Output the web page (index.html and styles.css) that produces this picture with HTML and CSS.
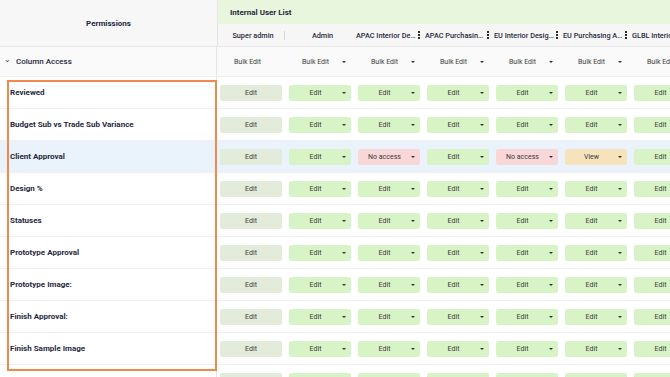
FILE: index.html
```html
<!DOCTYPE html>
<html lang="en">
  <head>
    <meta charset="UTF-8" />
    <meta name="viewport" content="width=device-width, initial-scale=1.0" />
    <title>Permissions</title>
    <link rel="stylesheet" href="styles.css">
  </head>
  <body>
    <div class="table">
      <!-- Header -->
      <div class="head">
        <div class="head-left">Permissions</div>
        <div class="head-right">
          <div class="group-title">Internal User List</div>
          <div class="cols">
            <div class="col-title"><span class="col-name">Super admin</span><span class="bar"></span></div>
            <div class="col-title"><span class="col-name">Admin</span></div>
            <div class="col-title wide"><span class="col-name">APAC Interior Designer</span><span class="grip"></span></div>
            <div class="col-title wide"><span class="col-name">APAC Purchasing Agent</span><span class="grip"></span></div>
            <div class="col-title wide"><span class="col-name">EU Interior Designer</span><span class="grip"></span></div>
            <div class="col-title wide"><span class="col-name">EU Purchasing Agent</span><span class="grip"></span></div>
            <div class="col-title wide"><span class="col-name">GLBL Interior Designer</span></div>
          </div>
        </div>
      </div>

      <!-- Group row -->
      <div class="row group-row">
        <div class="label group-label"><span class="chev">&#8964;</span>Column Access</div>
        <div class="cell"><div class="btn plain locked">Bulk Edit</div></div>
        <div class="cell"><div class="btn plain"><span class="txt">Bulk Edit</span><span class="caret"></span></div></div>
        <div class="cell"><div class="btn plain"><span class="txt">Bulk Edit</span><span class="caret"></span></div></div>
        <div class="cell"><div class="btn plain"><span class="txt">Bulk Edit</span><span class="caret"></span></div></div>
        <div class="cell"><div class="btn plain"><span class="txt">Bulk Edit</span><span class="caret"></span></div></div>
        <div class="cell"><div class="btn plain"><span class="txt">Bulk Edit</span><span class="caret"></span></div></div>
        <div class="cell"><div class="btn plain"><span class="txt">Bulk Edit</span><span class="caret"></span></div></div>
      </div>

      <div class="row">
        <div class="label">Reviewed</div>
        <div class="cell"><div class="btn locked">Edit</div></div>
        <div class="cell"><div class="btn edit"><span class="txt">Edit</span><span class="caret"></span></div></div>
        <div class="cell"><div class="btn edit"><span class="txt">Edit</span><span class="caret"></span></div></div>
        <div class="cell"><div class="btn edit"><span class="txt">Edit</span><span class="caret"></span></div></div>
        <div class="cell"><div class="btn edit"><span class="txt">Edit</span><span class="caret"></span></div></div>
        <div class="cell"><div class="btn edit"><span class="txt">Edit</span><span class="caret"></span></div></div>
        <div class="cell"><div class="btn edit"><span class="txt">Edit</span><span class="caret"></span></div></div>
      </div>

      <div class="row">
        <div class="label">Budget Sub vs Trade Sub Variance</div>
        <div class="cell"><div class="btn locked">Edit</div></div>
        <div class="cell"><div class="btn edit"><span class="txt">Edit</span><span class="caret"></span></div></div>
        <div class="cell"><div class="btn edit"><span class="txt">Edit</span><span class="caret"></span></div></div>
        <div class="cell"><div class="btn edit"><span class="txt">Edit</span><span class="caret"></span></div></div>
        <div class="cell"><div class="btn edit"><span class="txt">Edit</span><span class="caret"></span></div></div>
        <div class="cell"><div class="btn edit"><span class="txt">Edit</span><span class="caret"></span></div></div>
        <div class="cell"><div class="btn edit"><span class="txt">Edit</span><span class="caret"></span></div></div>
      </div>

      <div class="row selected">
        <div class="label">Client Approval</div>
        <div class="cell"><div class="btn locked">Edit</div></div>
        <div class="cell"><div class="btn edit"><span class="txt">Edit</span><span class="caret"></span></div></div>
        <div class="cell"><div class="btn none"><span class="txt">No access</span><span class="caret"></span></div></div>
        <div class="cell"><div class="btn edit"><span class="txt">Edit</span><span class="caret"></span></div></div>
        <div class="cell"><div class="btn none"><span class="txt">No access</span><span class="caret"></span></div></div>
        <div class="cell"><div class="btn view"><span class="txt">View</span><span class="caret"></span></div></div>
        <div class="cell"><div class="btn edit"><span class="txt">Edit</span><span class="caret"></span></div></div>
      </div>

      <div class="row">
        <div class="label">Design %</div>
        <div class="cell"><div class="btn locked">Edit</div></div>
        <div class="cell"><div class="btn edit"><span class="txt">Edit</span><span class="caret"></span></div></div>
        <div class="cell"><div class="btn edit"><span class="txt">Edit</span><span class="caret"></span></div></div>
        <div class="cell"><div class="btn edit"><span class="txt">Edit</span><span class="caret"></span></div></div>
        <div class="cell"><div class="btn edit"><span class="txt">Edit</span><span class="caret"></span></div></div>
        <div class="cell"><div class="btn edit"><span class="txt">Edit</span><span class="caret"></span></div></div>
        <div class="cell"><div class="btn edit"><span class="txt">Edit</span><span class="caret"></span></div></div>
      </div>

      <div class="row">
        <div class="label">Statuses</div>
        <div class="cell"><div class="btn locked">Edit</div></div>
        <div class="cell"><div class="btn edit"><span class="txt">Edit</span><span class="caret"></span></div></div>
        <div class="cell"><div class="btn edit"><span class="txt">Edit</span><span class="caret"></span></div></div>
        <div class="cell"><div class="btn edit"><span class="txt">Edit</span><span class="caret"></span></div></div>
        <div class="cell"><div class="btn edit"><span class="txt">Edit</span><span class="caret"></span></div></div>
        <div class="cell"><div class="btn edit"><span class="txt">Edit</span><span class="caret"></span></div></div>
        <div class="cell"><div class="btn edit"><span class="txt">Edit</span><span class="caret"></span></div></div>
      </div>

      <div class="row">
        <div class="label">Prototype Approval</div>
        <div class="cell"><div class="btn locked">Edit</div></div>
        <div class="cell"><div class="btn edit"><span class="txt">Edit</span><span class="caret"></span></div></div>
        <div class="cell"><div class="btn edit"><span class="txt">Edit</span><span class="caret"></span></div></div>
        <div class="cell"><div class="btn edit"><span class="txt">Edit</span><span class="caret"></span></div></div>
        <div class="cell"><div class="btn edit"><span class="txt">Edit</span><span class="caret"></span></div></div>
        <div class="cell"><div class="btn edit"><span class="txt">Edit</span><span class="caret"></span></div></div>
        <div class="cell"><div class="btn edit"><span class="txt">Edit</span><span class="caret"></span></div></div>
      </div>

      <div class="row">
        <div class="label">Prototype Image:</div>
        <div class="cell"><div class="btn locked">Edit</div></div>
        <div class="cell"><div class="btn edit"><span class="txt">Edit</span><span class="caret"></span></div></div>
        <div class="cell"><div class="btn edit"><span class="txt">Edit</span><span class="caret"></span></div></div>
        <div class="cell"><div class="btn edit"><span class="txt">Edit</span><span class="caret"></span></div></div>
        <div class="cell"><div class="btn edit"><span class="txt">Edit</span><span class="caret"></span></div></div>
        <div class="cell"><div class="btn edit"><span class="txt">Edit</span><span class="caret"></span></div></div>
        <div class="cell"><div class="btn edit"><span class="txt">Edit</span><span class="caret"></span></div></div>
      </div>

      <div class="row">
        <div class="label">Finish Approval:</div>
        <div class="cell"><div class="btn locked">Edit</div></div>
        <div class="cell"><div class="btn edit"><span class="txt">Edit</span><span class="caret"></span></div></div>
        <div class="cell"><div class="btn edit"><span class="txt">Edit</span><span class="caret"></span></div></div>
        <div class="cell"><div class="btn edit"><span class="txt">Edit</span><span class="caret"></span></div></div>
        <div class="cell"><div class="btn edit"><span class="txt">Edit</span><span class="caret"></span></div></div>
        <div class="cell"><div class="btn edit"><span class="txt">Edit</span><span class="caret"></span></div></div>
        <div class="cell"><div class="btn edit"><span class="txt">Edit</span><span class="caret"></span></div></div>
      </div>

      <div class="row">
        <div class="label">Finish Sample Image</div>
        <div class="cell"><div class="btn locked">Edit</div></div>
        <div class="cell"><div class="btn edit"><span class="txt">Edit</span><span class="caret"></span></div></div>
        <div class="cell"><div class="btn edit"><span class="txt">Edit</span><span class="caret"></span></div></div>
        <div class="cell"><div class="btn edit"><span class="txt">Edit</span><span class="caret"></span></div></div>
        <div class="cell"><div class="btn edit"><span class="txt">Edit</span><span class="caret"></span></div></div>
        <div class="cell"><div class="btn edit"><span class="txt">Edit</span><span class="caret"></span></div></div>
        <div class="cell"><div class="btn edit"><span class="txt">Edit</span><span class="caret"></span></div></div>
      </div>

      <div class="row">
        <div class="label">Finish Notes</div>
        <div class="cell"><div class="btn locked">Edit</div></div>
        <div class="cell"><div class="btn edit"><span class="txt">Edit</span><span class="caret"></span></div></div>
        <div class="cell"><div class="btn edit"><span class="txt">Edit</span><span class="caret"></span></div></div>
        <div class="cell"><div class="btn edit"><span class="txt">Edit</span><span class="caret"></span></div></div>
        <div class="cell"><div class="btn edit"><span class="txt">Edit</span><span class="caret"></span></div></div>
        <div class="cell"><div class="btn edit"><span class="txt">Edit</span><span class="caret"></span></div></div>
        <div class="cell"><div class="btn edit"><span class="txt">Edit</span><span class="caret"></span></div></div>
      </div>

      <!-- Highlight box -->
      <div class="highlight"></div>
    </div>
  </body>
</html>
```

FILE: styles.css
```css
/* Page */
body {
  margin: 0;
  width: 670px;
  height: 377px;
  overflow: hidden;
  background: #fff;
  font-family: Roboto, "Liberation Sans", sans-serif;
  color: #1f2940;
}

.table {
  position: relative;
  width: 700px;
}

/* Header */
.head {
  display: flex;
  height: 47px;
  border-bottom: 1px solid #e8e8e8;
  box-sizing: border-box;
}

.head-left {
  width: 217px;
  flex-shrink: 0;
  display: flex;
  align-items: center;
  justify-content: center;
  background: #f7f7f7;
  border-right: 1px solid #e4e4e4;
  font-size: 8px;
  font-weight: 700;
}

.head-right {
  flex: 1;
  display: flex;
  flex-direction: column;
}

.group-title {
  height: 24px;
  display: flex;
  align-items: center;
  padding-left: 12px;
  background: #e8f6dd;
  font-size: 8px;
  font-weight: 700;
}

.cols {
  flex: 1;
  display: flex;
  background: #f6f6f6;
}

.col-title {
  width: 69px;
  flex-shrink: 0;
  display: flex;
  align-items: center;
  padding: 0 2px 0 4px;
  box-sizing: border-box;
  font-size: 7.3px;
  font-weight: 500;
}

/* user columns: text runs nearly to the edge, grip at the end */
.wide {
  padding: 0;
}

.col-name {
  flex: 1;
  min-width: 0;
  text-align: center;
  white-space: nowrap;
  overflow: hidden;
  text-overflow: ellipsis;
}

.bar {
  width: 1px;
  height: 9px;
  background: #d6d6d6;
}

.grip {
  width: 0;
  height: 8px;
  flex-shrink: 0;
  margin: 0 5px 0 2px;
  border-left: 2px dotted #2a2a2a;
}

/* Rows */
.row {
  display: flex;
  height: 32px;
  border-bottom: 1px solid #efefef;
  box-sizing: border-box;
}

.group-row {
  height: 30px;
  background: #fafafa;
}

.selected {
  background: #eaf2fc;
}

.label {
  width: 217px;
  flex-shrink: 0;
  display: flex;
  align-items: center;
  padding-left: 10px;
  box-sizing: border-box;
  border-right: 1px solid #e4e4e4;
  font-size: 8px;
  font-weight: 700;
}

.group-label {
  padding-left: 4px;
  font-weight: 500;
}

.chev {
  font-size: 8px;
  margin: -4px 5px 0 0;
  color: #444;
}

.cell {
  width: 69px;
  flex-shrink: 0;
  display: flex;
  align-items: center;
  padding: 0 4px 0 3px;
  box-sizing: border-box;
}

/* Buttons */
.btn {
  width: 62px;
  height: 16px;
  display: flex;
  align-items: center;
  justify-content: center;
  border-radius: 2px;
  font-size: 7px;
  color: #3a3a3a;
}

.btn .txt {
  flex: 1;
  text-align: center;
}

.btn .caret {
  width: 0;
  height: 0;
  margin-right: 5px;
  border-left: 2px solid transparent;
  border-right: 2px solid transparent;
  border-top: 2.5px solid #333;
}

.locked {
  background: #e3ebdb;
}

.plain.locked {
  background: none;
  justify-content: flex-start;
  padding-left: 14px;
  box-sizing: border-box;
}

.plain {
  background: none;
}

.edit {
  background: #d8f4c6;
}

.none {
  background: #f9d7d7;
}

.view {
  background: #f7e3bb;
}

/* Orange box over the labels */
.highlight {
  position: absolute;
  left: 7px;
  top: 80px;
  width: 210px;
  height: 291px;
  border: 2px solid #ef8a4c;
  box-sizing: border-box;
  pointer-events: none;
}
```
